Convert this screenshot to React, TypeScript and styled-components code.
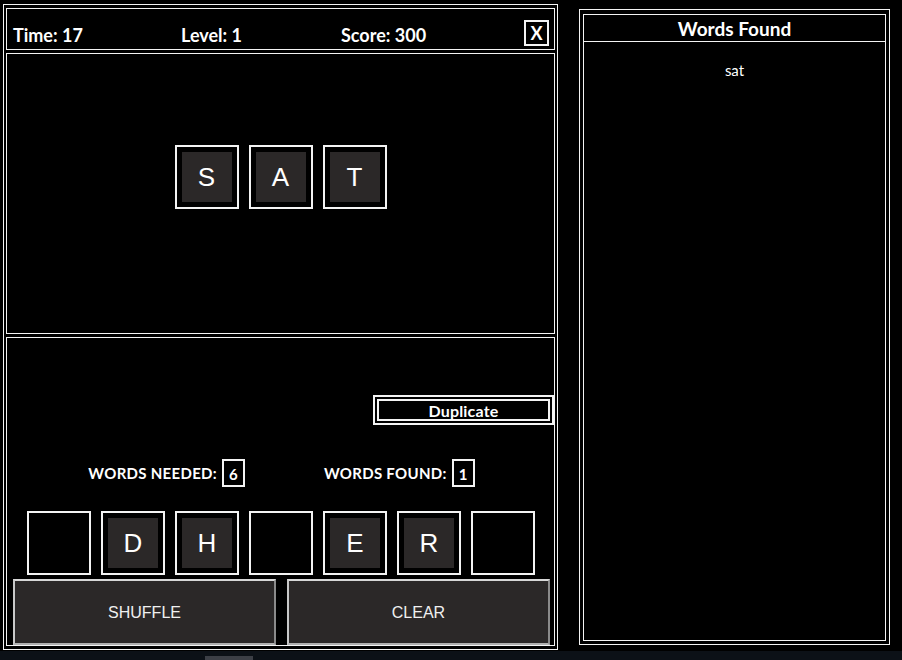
import styled, { createGlobalStyle } from 'styled-components'

const GlobalStyle = createGlobalStyle`
  html, body {
    margin: 0;
    padding: 0;
    background: #000;
  }
  body {
    font-family: Lato, "Open Sans", sans-serif;
    color: #fff;
  }
  * {
    box-sizing: border-box;
  }
`

const line = '#f4f4f4'
const tileFill = '#2b2828'

const Page = styled.div`
  width: 902px;
  height: 660px;
  display: flex;
  flex-direction: column;
  overflow: hidden;
`

const Main = styled.div`
  height: 651px;
  display: flex;
  gap: 21px;
  padding: 4px 0 0 3px;
  background: #000;
`

const GamePanel = styled.div`
  width: 555px;
  height: 646px;
  border: 1px solid ${line};
  padding: 3px 2px;
  display: flex;
  flex-direction: column;
  gap: 3px;
`

const Header = styled.div`
  height: 42px;
  border: 1px solid ${line};
  display: grid;
  grid-template-columns: 168px 160px 1fr auto;
  align-items: end;
  padding: 0 5px 3px 6px;
`

const Stat = styled.div`
  font-size: 18px;
  font-weight: 700;
  line-height: 22px;
`

const CloseButton = styled.button`
  width: 25px;
  height: 26px;
  border: 2px solid ${line};
  background: #000;
  color: #fff;
  font-family: inherit;
  font-size: 18px;
  font-weight: 700;
  padding: 0;
  display: flex;
  align-items: center;
  justify-content: center;
`

const WordArea = styled.div`
  height: 281px;
  border: 1px solid ${line};
  padding-top: 91px;
  display: flex;
  justify-content: center;
  align-items: flex-start;
  gap: 10px;
`

const TileRow = styled.div`
  display: flex;
  justify-content: center;
  gap: 10px;
`

const Tile = styled.div`
  width: 64px;
  height: 64px;
  border: 2px solid ${line};
  padding: 5px;
  background: #000;
`

const TileFace = styled.div`
  width: 50px;
  height: 50px;
  background: ${tileFill};
  display: flex;
  align-items: center;
  justify-content: center;
  font-family: "Liberation Sans", Arial, sans-serif;
  font-size: 26px;
  color: #fff;
`

const ControlArea = styled.div`
  height: 309px;
  border: 1px solid ${line};
  display: flex;
  flex-direction: column;
`

const MessageRow = styled.div`
  display: flex;
  justify-content: flex-end;
  margin-top: 57px;
`

const MessageBox = styled.div`
  width: 181px;
  height: 30px;
  border: 6px double ${line};
  display: flex;
  align-items: center;
  justify-content: center;
  font-size: 16px;
  font-weight: 700;
  letter-spacing: 0.2px;
  padding-top: 1px;
`

const CounterRow = styled.div`
  display: flex;
  justify-content: center;
  gap: 79px;
  margin-top: 34px;
  padding-left: 2px;
`

const Counter = styled.div`
  display: flex;
  align-items: center;
  gap: 5px;
  font-size: 15px;
  font-weight: 700;
  letter-spacing: 0.3px;
  text-transform: uppercase;
`

const CounterValue = styled.div`
  width: 23px;
  height: 28px;
  border: 2px solid ${line};
  display: flex;
  align-items: center;
  justify-content: center;
  padding-top: 1px;
`

const RackRow = styled(TileRow)`
  margin-top: 24px;
  padding-left: 1px;
`

const ButtonRow = styled.div`
  display: grid;
  grid-template-columns: 1fr 1fr;
  gap: 11px;
  margin-top: 4px;
  padding: 0 4px 0 6px;
`

const ActionButton = styled.button`
  height: 66px;
  background: ${tileFill};
  border: 2px solid;
  border-color: #d8d8d8 #8a8a8a #b0b0b0 #c8c8c8;
  color: #f0f0f0;
  font-family: "Liberation Sans", Arial, sans-serif;
  font-size: 16px;
  padding-top: 2px;
`

const WordsPanel = styled.div`
  width: 311px;
  height: 636px;
  margin-top: 5px;
  border: 1px solid ${line};
  padding: 4px 3px 3px 3px;
`

const WordsInner = styled.div`
  height: 100%;
  border: 1px solid ${line};
  display: flex;
  flex-direction: column;
`

const WordsTitle = styled.div`
  height: 27px;
  border-bottom: 1px solid ${line};
  display: flex;
  align-items: center;
  justify-content: center;
  font-size: 19px;
  font-weight: 700;
`

const WordList = styled.ul`
  list-style: none;
  margin: 0;
  padding: 18px 0 0;
  text-align: center;
  font-size: 15px;
  line-height: 20px;
`

const BottomBar = styled.div`
  flex: 1;
  background: #0c1117;
  padding-top: 5px;
`

const BarThumb = styled.div`
  width: 48px;
  height: 4px;
  margin-left: 205px;
  background: #3c3f46;
`

const currentWord = ['S', 'A', 'T']
const rack = ['', 'D', 'H', '', 'E', 'R', '']
const foundWords = ['sat']

function LetterTile({ letter }: { letter: string }) {
  return <Tile>{letter && <TileFace>{letter}</TileFace>}</Tile>
}

export default function App() {
  return (
    <Page>
      <GlobalStyle />
      <Main>
        <GamePanel>
          <Header>
            <Stat>Time: 17</Stat>
            <Stat>Level: 1</Stat>
            <Stat>Score: 300</Stat>
            <CloseButton>X</CloseButton>
          </Header>

          <WordArea>
            {currentWord.map((l, i) => (
              <LetterTile key={i} letter={l} />
            ))}
          </WordArea>

          <ControlArea>
            <MessageRow>
              <MessageBox>Duplicate</MessageBox>
            </MessageRow>
            <CounterRow>
              <Counter>
                Words Needed:
                <CounterValue>6</CounterValue>
              </Counter>
              <Counter>
                Words Found:
                <CounterValue>1</CounterValue>
              </Counter>
            </CounterRow>
            <RackRow>
              {rack.map((l, i) => (
                <LetterTile key={i} letter={l} />
              ))}
            </RackRow>
            <ButtonRow>
              <ActionButton>SHUFFLE</ActionButton>
              <ActionButton>CLEAR</ActionButton>
            </ButtonRow>
          </ControlArea>
        </GamePanel>

        <WordsPanel>
          <WordsInner>
            <WordsTitle>Words Found</WordsTitle>
            <WordList>
              {foundWords.map(w => (
                <li key={w}>{w}</li>
              ))}
            </WordList>
          </WordsInner>
        </WordsPanel>
      </Main>
      <BottomBar>
        <BarThumb />
      </BottomBar>
    </Page>
  )
}
